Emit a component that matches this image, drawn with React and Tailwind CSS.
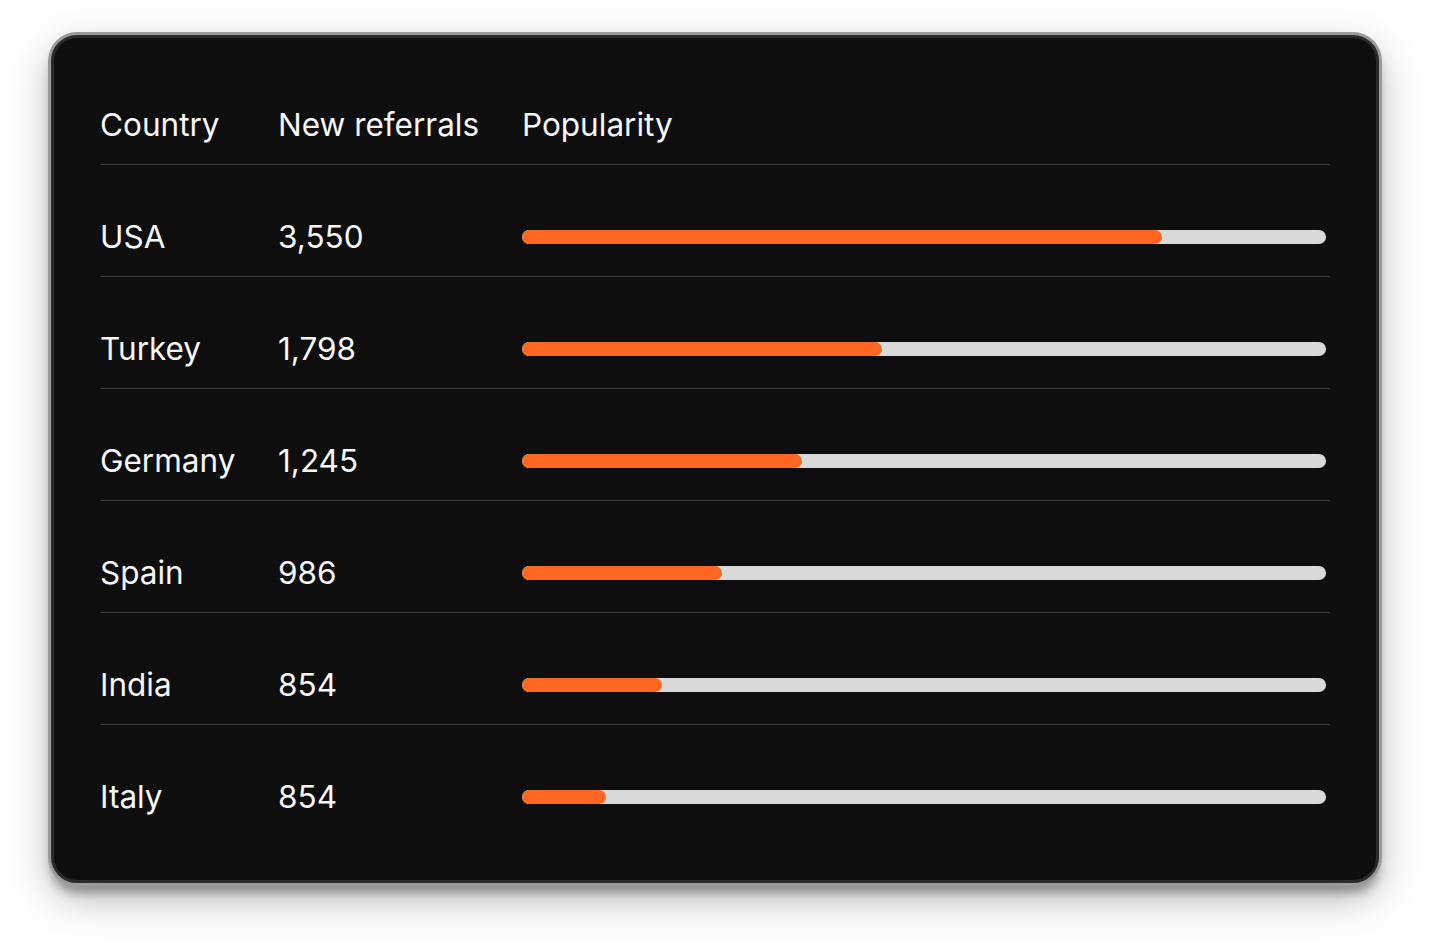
import React from 'react';

const rows = [
  { country: 'USA', referrals: '3,550', pct: 79.6 },
  { country: 'Turkey', referrals: '1,798', pct: 44.8 },
  { country: 'Germany', referrals: '1,245', pct: 34.8 },
  { country: 'Spain', referrals: '986', pct: 24.9 },
  { country: 'India', referrals: '854', pct: 17.4 },
  { country: 'Italy', referrals: '854', pct: 10.4 },
];

const Bar = ({ pct }) => (
  <div className="mr-1 h-[14px] rounded-full bg-[#d9d9d9] overflow-hidden">
    <div className="h-full rounded-full bg-[#ff6620]" style={{ width: `${pct}%` }} />
  </div>
);

function App() {
  return (
    <div className="min-h-screen bg-white pt-[35px] font-['Inter',sans-serif]">
      <div className="mx-auto w-[1328px] h-[848px] rounded-[26px] border-[3px] border-[#2a2a2c] bg-[#0e0e0e] px-[46px] pt-[71px] shadow-[0_0_0_3px_#9a9a9a,0_10px_10px_rgba(0,0,0,0.3),0_14px_40px_rgba(0,0,0,0.3)]">
        <div className="grid grid-cols-[178px_244px_1fr] items-center border-b border-[#3b3b3f] pb-[23px] text-[31.5px] leading-[32px] text-[#f7f7f7]">
          <span>Country</span>
          <span>New referrals</span>
          <span>Popularity</span>
        </div>

        {rows.map((r, i) => (
          <div
            key={r.country}
            className={`grid grid-cols-[178px_244px_1fr] items-center pt-[56px] pb-[23px] text-[31.5px] leading-[32px] text-[#f7f7f7] ${i < rows.length - 1 ? 'border-b border-[#3b3b3f]' : ''}`}
          >
            <span>{r.country}</span>
            <span>{r.referrals}</span>
            <Bar pct={r.pct} />
          </div>
        ))}
      </div>
    </div>
  );
}

export default App;
